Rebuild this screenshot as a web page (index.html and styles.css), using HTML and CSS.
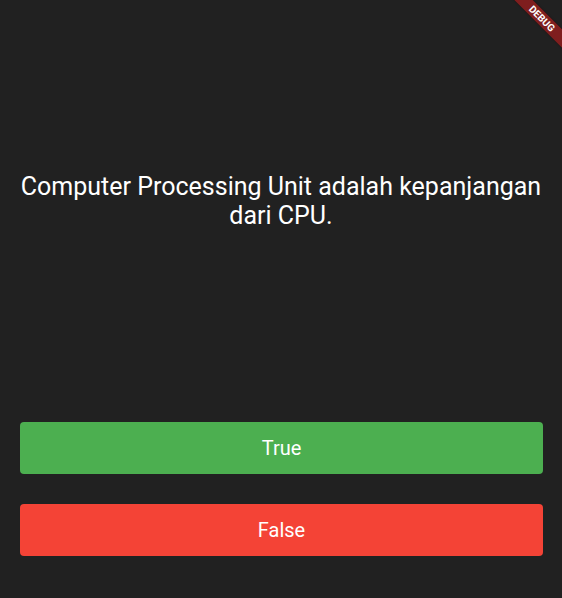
FILE: index.html
```html
<!DOCTYPE html>
<html>
<head>
<meta charset="utf-8">
<link rel="stylesheet" href="styles.css">
</head>
<body>
<div class="screen">
  <div class="question">
    <p class="question-text">Computer Processing Unit adalah kepanjangan dari CPU.</p>
  </div>
  <div class="answers">
    <button class="btn btn-true">True</button>
    <button class="btn btn-false">False</button>
  </div>
  <div class="debug-banner"><span>DEBUG</span></div>
</div>
</body>
</html>
```

FILE: styles.css
```css
html, body {
  margin: 0;
  padding: 0;
  background: #212121;
}
.screen {
  position: relative;
  width: 562px;
  height: 598px;
  overflow: hidden;
  display: flex;
  flex-direction: column;
  font-family: Roboto, "Liberation Sans", sans-serif;
  color: #fff;
}
.question {
  flex: 1;
  display: flex;
  align-items: center;
  justify-content: center;
  padding: 0 10px;
}
.question-text {
  margin: 0;
  font-size: 25px;
  line-height: 29px;
  text-align: center;
}
.answers {
  display: flex;
  flex-direction: column;
  gap: 30px;
  padding: 20px 19px 42px 20px;
}
.btn {
  height: 52px;
  border: none;
  border-radius: 4px;
  color: #fff;
  font-family: Roboto, "Liberation Sans", sans-serif;
  font-size: 20px;
  padding: 0;
}
.btn-true { background: #4caf50; }
.btn-false { background: #f44336; }
.debug-banner {
  position: absolute;
  top: 12px;
  right: -30px;
  width: 100px;
  height: 13px;
  background: #7f1e1e;
  transform: rotate(45deg);
  display: flex;
  align-items: center;
  justify-content: center;
  box-shadow: 0 0 2px rgba(0,0,0,0.5);
}
.debug-banner span {
  font-size: 10px;
  font-weight: bold;
  color: #fff;
  line-height: 13px;
}
```
